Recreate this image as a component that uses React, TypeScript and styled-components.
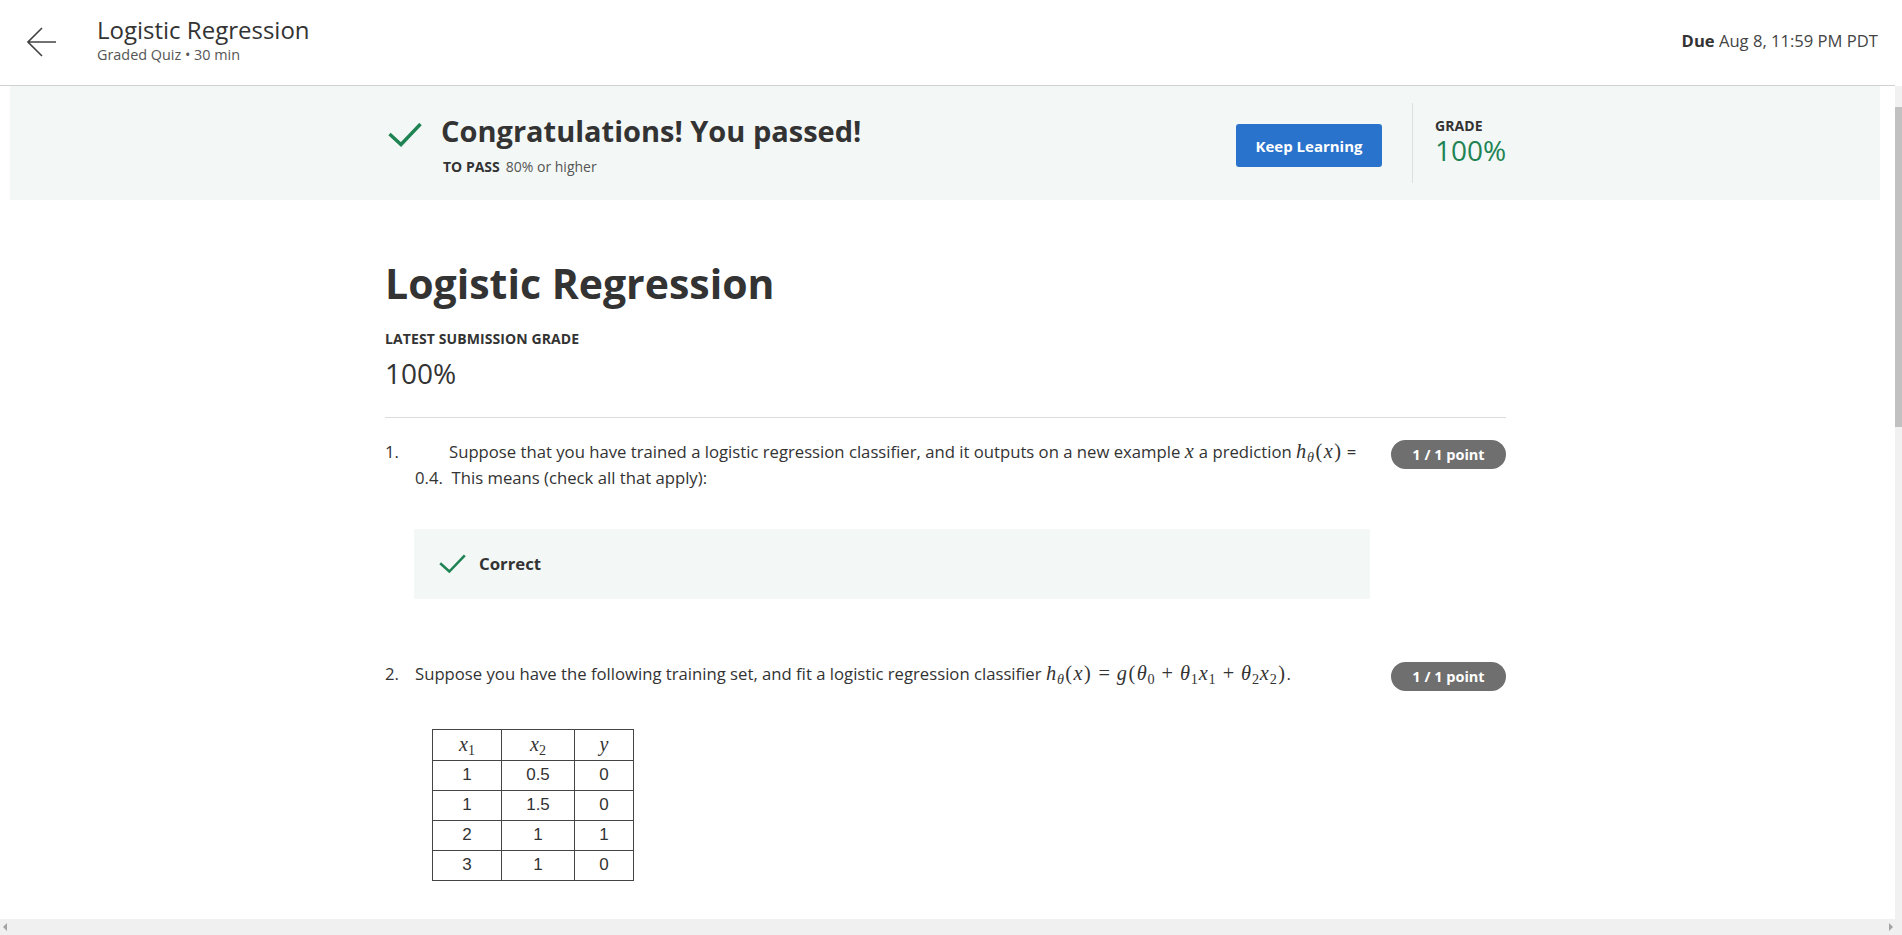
import React from "react";
import styled, { createGlobalStyle } from "styled-components";

const Global = createGlobalStyle`
  html, body { margin: 0; padding: 0; overflow: hidden; background: #fff; }
  body { font-family: "Open Sans", "Noto Sans", Arial, sans-serif; color: #333; }
  * { box-sizing: border-box; }
`;

const Frame = styled.div`
  width: 1902px;
  height: 935px;
  display: flex;
  flex-direction: column;
  overflow: hidden;
`;

const Upper = styled.div`
  flex: 1;
  display: flex;
  min-height: 0;
`;

const MainCol = styled.div`
  flex: 1;
  display: flex;
  flex-direction: column;
  min-width: 0;
  overflow: hidden;
`;

const Header = styled.header`
  height: 86px;
  flex: none;
  border-bottom: 1px solid #d0d0d0;
  display: flex;
  align-items: flex-start;
  padding: 15px 17px 0 27px;
`;

const BackButton = styled.button`
  border: 0;
  background: none;
  padding: 0;
  margin: 12px 0 0 0;
  width: 30px;
  height: 30px;
  cursor: pointer;
  display: flex;
`;

const TitleBlock = styled.div`
  margin-left: 40px;
  display: flex;
  flex-direction: column;
`;

const HeaderTitle = styled.h1`
  margin: 0;
  font-size: 24px;
  line-height: 30px;
  font-weight: 400;
  color: #333;
`;

const HeaderSub = styled.div`
  margin-top: 1px;
  font-size: 14.4px;
  line-height: 18px;
  color: #555;
`;

const Due = styled.div`
  margin-left: auto;
  margin-top: 15px;
  font-size: 16.6px;
  line-height: 22px;
  color: #444;
  b { font-weight: 700; color: #333; }
`;

const Scroller = styled.main`
  flex: 1;
  min-height: 0;
  overflow: hidden;
`;

const Banner = styled.section`
  height: 114px;
  margin: 0 15px 0 10px;
  background: #f3f8f6;
  display: flex;
  align-items: center;
  padding-left: 375px;
`;

const BannerInner = styled.div`
  width: 1121px;
  display: flex;
  align-items: center;
`;

const PassGroup = styled.div`
  display: flex;
  align-items: flex-start;
  margin-top: 4px;
`;

const PassIcon = styled.svg`
  flex: none;
  margin: 10px 0 0 3px;
`;

const PassText = styled.div`
  margin-left: 19px;
  display: flex;
  flex-direction: column;
`;

const PassTitle = styled.h2`
  margin: 0;
  font-size: 29px;
  line-height: 36px;
  font-weight: 700;
  color: #333;
`;

const PassLine = styled.div`
  margin-top: 8px;
  margin-left: 2px;
  font-size: 14px;
  line-height: 20px;
  color: #555;
  b { font-weight: 700; color: #333; margin-right: 6px; }
`;

const RightGroup = styled.div`
  margin-left: auto;
  display: flex;
  align-items: center;
`;

const PrimaryButton = styled.button`
  width: 146px;
  height: 43px;
  border: 0;
  border-radius: 3px;
  background: #2a73cc;
  color: #fff;
  font-family: "Open Sans", Arial, sans-serif;
  font-size: 15px;
  font-weight: 700;
  margin-top: 5px;
  cursor: pointer;
`;

const VDivider = styled.div`
  width: 1px;
  height: 80px;
  background: #dcdfe0;
  margin: 0 22px 0 30px;
`;

const GradeBlock = styled.div`
  display: flex;
  flex-direction: column;
  width: 71px;
  margin-top: -4px;
`;

const SmallLabel = styled.div`
  font-size: 14px;
  line-height: 18px;
  font-weight: 700;
  letter-spacing: 0.1px;
  text-transform: uppercase;
  color: #333;
`;

const GradeValue = styled.div<{ $green?: boolean }>`
  font-size: 28px;
  line-height: ${(p) => (p.$green ? "30px" : "36px")};
  font-weight: 400;
  color: ${(p) => (p.$green ? "#1f8354" : "#333")};
  white-space: nowrap;
`;

const Column = styled.div`
  width: 1121px;
  margin-left: 385px;
  display: flex;
  flex-direction: column;
`;

const PageTitle = styled.h1`
  margin: 58px 0 0 0;
  font-size: 41px;
  line-height: 50px;
  font-weight: 700;
  color: #333;
`;

const SubmissionBlock = styled.div`
  margin-top: 22px;
  display: flex;
  flex-direction: column;
  gap: 7px;
`;

const Rule = styled.hr`
  margin: 26px 0 0 0;
  border: 0;
  border-top: 1px solid #dcdcdc;
  width: 100%;
`;

const QuestionRow = styled.div<{ $top: number }>`
  display: flex;
  align-items: flex-start;
  margin-top: ${(p) => p.$top}px;
  font-size: 16.7px;
  line-height: 25.6px;
  color: #333;
`;

const QNumber = styled.div`
  width: 30px;
  flex: none;
`;

const QBody = styled.div`
  width: 955px;
  flex: none;
`;

const QText = styled.p<{ $indent?: number }>`
  margin: 0;
  text-indent: ${(p) => p.$indent || 0}px;
`;

const PointBadge = styled.div`
  margin-left: auto;
  margin-top: 1px;
  width: 115px;
  height: 29px;
  border-radius: 15px;
  background: #6f6f6f;
  color: #fff;
  font-size: 14.5px;
  font-weight: 700;
  display: flex;
  align-items: center;
  justify-content: center;
`;

const CorrectBox = styled.div`
  margin-top: 39px;
  height: 70px;
  background: #f3f8f6;
  display: flex;
  align-items: center;
  padding-left: 25px;
  margin-left: -1px;
`;

const CorrectLabel = styled.span`
  margin-left: 13px;
  font-size: 16.8px;
  font-weight: 700;
  color: #333;
`;

const MathI = styled.span`
  font-family: "Liberation Serif", "DejaVu Serif", serif;
  font-style: italic;
  font-size: 1.22em;
  line-height: 1;
  letter-spacing: 0.04em;
  white-space: nowrap;
  sub {
    font-style: normal;
    font-size: 0.7em;
    vertical-align: -0.25em;
    line-height: 0;
  }
  sub.gr { font-style: italic; }
`;

const Paren = styled.span`
  font-style: normal;
  padding: 0 0.03em;
`;

const Op = styled.span`
  font-style: normal;
  padding: 0 0.3em;
`;

const DataTable = styled.table`
  margin: 42px 0 0 17px;
  border-collapse: collapse;
  border: 1.5px solid #333;
  font-family: "Liberation Sans", Arial, sans-serif;
  font-size: 17px;
  color: #333;
  th, td {
    border: 1px solid #444;
    text-align: center;
    padding: 0;
  }
  th {
    height: 31px;
    font-family: "Liberation Serif", "DejaVu Serif", serif;
    font-style: italic;
    font-weight: 400;
    font-size: 20px;
  }
  td { height: 30px; }
  sub { font-style: normal; font-size: 0.7em; vertical-align: -0.3em; line-height: 0; }
`;

const VScroll = styled.div`
  width: 7px;
  flex: none;
  display: flex;
  flex-direction: column;
`;

const VScrollCap = styled.div`
  height: 86px;
  background: #fff;
`;

const VTrack = styled.div`
  flex: 1;
  background: #f1f1f1;
  padding-top: 21px;
`;

const VThumb = styled.div`
  height: 320px;
  background: #c1c1c1;
`;

const HScroll = styled.div`
  height: 16px;
  flex: none;
  background: #f0f0f0;
  display: flex;
  align-items: center;
  padding: 0 9px 0 3px;
`;

const Arrow = styled.div<{ $dir: "left" | "right" }>`
  width: 0;
  height: 0;
  border-top: 4px solid transparent;
  border-bottom: 4px solid transparent;
  ${(p) =>
    p.$dir === "left"
      ? "border-right: 4px solid #a3a3a3;"
      : "border-left: 4px solid #a3a3a3; margin-left: auto;"}
`;

const rows = [
  ["1", "0.5", "0"],
  ["1", "1.5", "0"],
  ["2", "1", "1"],
  ["3", "1", "0"],
];

function CheckIcon({ w, h }: { w: number; h: number }) {
  return (
    <svg width={w} height={h} viewBox="0 0 34 24" fill="none">
      <polyline points="1.5,11 13,21.5 32.5,1" stroke="#1f8354" strokeWidth="3.2" />
    </svg>
  );
}

function HTheta() {
  return (
    <>
      h<sub className="gr">θ</sub>
      <Paren>(</Paren>x<Paren>)</Paren>
    </>
  );
}

export default function App() {
  return (
    <>
      <Global />
      <Frame>
        <Upper>
          <MainCol>
            <Header>
              <BackButton aria-label="Back">
                <svg width="30" height="30" viewBox="0 0 30 30" fill="none">
                  <path d="M15 1 L1 15 L15 29 M1 15 H29" stroke="#444" strokeWidth="1.6" />
                </svg>
              </BackButton>
              <TitleBlock>
                <HeaderTitle>Logistic Regression</HeaderTitle>
                <HeaderSub>Graded Quiz • 30 min</HeaderSub>
              </TitleBlock>
              <Due>
                <b>Due</b> Aug 8, 11:59 PM PDT
              </Due>
            </Header>
            <Scroller>
              <Banner>
                <BannerInner>
                  <PassGroup>
                    <PassIcon width="34" height="24" viewBox="0 0 34 24" fill="none">
                      <polyline points="1.5,11 13,21.5 32.5,1" stroke="#1f8354" strokeWidth="3.4" />
                    </PassIcon>
                    <PassText>
                      <PassTitle>Congratulations! You passed!</PassTitle>
                      <PassLine>
                        <b>TO PASS</b>80% or higher
                      </PassLine>
                    </PassText>
                  </PassGroup>
                  <RightGroup>
                    <PrimaryButton>Keep Learning</PrimaryButton>
                    <VDivider />
                    <GradeBlock>
                      <SmallLabel>Grade</SmallLabel>
                      <GradeValue $green>100%</GradeValue>
                    </GradeBlock>
                  </RightGroup>
                </BannerInner>
              </Banner>
              <Column>
                <PageTitle>Logistic Regression</PageTitle>
                <SubmissionBlock>
                  <SmallLabel>Latest Submission Grade</SmallLabel>
                  <GradeValue>100%</GradeValue>
                </SubmissionBlock>
                <Rule />
                <QuestionRow $top={21}>
                  <QNumber>1.</QNumber>
                  <QBody>
                    <QText $indent={34}>
                      Suppose that you have trained a logistic regression classifier, and it outputs on a new
                      example <MathI>x</MathI> a prediction{" "}
                      <MathI>
                        <HTheta />
                      </MathI>{" "}
                      = 0.4.&nbsp; This means (check all that apply):
                    </QText>
                    <CorrectBox>
                      <CheckIcon w={27} h={20} />
                      <CorrectLabel>Correct</CorrectLabel>
                    </CorrectBox>
                  </QBody>
                  <PointBadge>1 / 1 point</PointBadge>
                </QuestionRow>
                <QuestionRow $top={62}>
                  <QNumber>2.</QNumber>
                  <QBody>
                    <QText>
                      Suppose you have the following training set, and fit a logistic regression classifier{" "}
                      <MathI>
                        <HTheta />
                        <Op>=</Op>g<Paren>(</Paren>θ<sub>0</sub>
                        <Op>+</Op>θ<sub>1</sub>x<sub>1</sub>
                        <Op>+</Op>θ<sub>2</sub>x<sub>2</sub>
                        <Paren>)</Paren>
                      </MathI>
                      .
                    </QText>
                    <DataTable>
                      <colgroup>
                        <col style={{ width: 69 }} />
                        <col style={{ width: 73 }} />
                        <col style={{ width: 59 }} />
                      </colgroup>
                      <thead>
                        <tr>
                          <th>
                            x<sub>1</sub>
                          </th>
                          <th>
                            x<sub>2</sub>
                          </th>
                          <th>y</th>
                        </tr>
                      </thead>
                      <tbody>
                        {rows.map((r, i) => (
                          <tr key={i}>
                            {r.map((c, j) => (
                              <td key={j}>{c}</td>
                            ))}
                          </tr>
                        ))}
                      </tbody>
                    </DataTable>
                  </QBody>
                  <PointBadge>1 / 1 point</PointBadge>
                </QuestionRow>
              </Column>
            </Scroller>
          </MainCol>
          <VScroll>
            <VScrollCap />
            <VTrack>
              <VThumb />
            </VTrack>
          </VScroll>
        </Upper>
        <HScroll>
          <Arrow $dir="left" />
          <Arrow $dir="right" />
        </HScroll>
      </Frame>
    </>
  );
}
